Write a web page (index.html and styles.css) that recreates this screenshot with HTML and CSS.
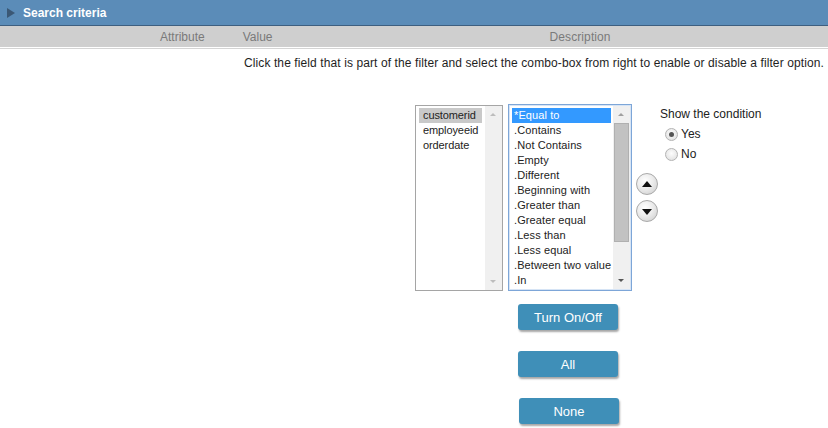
FILE: index.html
```html
<!DOCTYPE html>
<html>
<head>
<meta charset="utf-8">
<link rel="stylesheet" href="styles.css">
</head>
<body>
<div class="panel-head"><span class="tri"></span><span class="title">Search criteria</span></div>
<div class="cols">
  <span class="col-attr">Attribute</span>
  <span class="col-value">Value</span>
  <span class="col-desc">Description</span>
</div>
<div class="rule"></div>
<p class="hint">Click the field that is part of the filter and select the combo-box from right to enable or disable a filter option.</p>
<div class="filter">
  <div class="listbox fields">
    <div class="items">
      <div class="item sel-gray">customerid</div>
      <div class="item">employeeid</div>
      <div class="item">orderdate</div>
    </div>
    <div class="sbar">
      <span class="arr up"></span>
      <span class="track"></span>
      <span class="arr down"></span>
    </div>
  </div>
  <div class="listbox ops">
    <div class="items">
      <div class="item sel-blue">*Equal to</div>
      <div class="item">.Contains</div>
      <div class="item">.Not Contains</div>
      <div class="item">.Empty</div>
      <div class="item">.Different</div>
      <div class="item">.Beginning with</div>
      <div class="item">.Greater than</div>
      <div class="item">.Greater equal</div>
      <div class="item">.Less than</div>
      <div class="item">.Less equal</div>
      <div class="item">.Between two value</div>
      <div class="item">.In</div>
    </div>
    <div class="sbar">
      <span class="arr up dark"></span>
      <span class="track"><span class="thumb"></span></span>
      <span class="arr down dark"></span>
    </div>
  </div>
  <div class="movers">
    <span class="round"><span class="t-up"></span></span>
    <span class="round"><span class="t-down"></span></span>
  </div>
  <div class="cond">
    <div class="cond-title">Show the condition</div>
    <label class="radio"><span class="dot on"></span>Yes</label>
    <label class="radio"><span class="dot"></span>No</label>
  </div>
</div>
<div class="actions">
  <button class="btn">Turn On/Off</button>
  <button class="btn">All</button>
  <button class="btn nudge">None</button>
</div>
</body>
</html>
```
FILE: styles.css
```css
* { box-sizing: border-box; }
body {
  margin: 0;
  font-family: "Liberation Sans", Arial, sans-serif;
  font-size: 12px;
  color: #222;
  background: #fff;
  width: 828px;
  height: 428px;
  overflow: hidden;
}
.panel-head {
  height: 26px;
  background: #5b8cb8;
  border-bottom: 1px solid #3e5f80;
  display: flex;
  align-items: center;
  padding-left: 7px;
}
.tri {
  width: 0; height: 0;
  border-top: 5px solid transparent;
  border-bottom: 5px solid transparent;
  border-left: 8px solid #3b5875;
  margin-right: 8px;
}
.title {
  color: #fff;
  font-weight: bold;
  font-size: 12px;
}
.cols {
  height: 21px;
  background: #cfcfcf;
  color: #7a7a7a;
  display: flex;
  align-items: center;
  font-size: 12px;
}
.col-attr { margin-left: 160px; }
.col-value { margin-left: 38px; }
.col-desc { margin-left: 277px; letter-spacing: 0.1px; }
.rule {
  height: 2px;
  border-top: 1px solid #fff;
  border-bottom: 1px solid #d4d4d4;
}
.hint {
  margin: 7px 0 0 244px;
  font-size: 12px;
  line-height: 14px;
  color: #1e1e1e;
  white-space: nowrap;
  letter-spacing: 0.1px;
}
.filter {
  display: flex;
  align-items: flex-start;
  margin-top: 34px;
  padding-left: 415px;
}
.listbox {
  display: flex;
  background: #fff;
}
.fields {
  width: 88px;
  height: 186px;
  margin-top: 1px;
  border: 1px solid #a5a5a5;
}
.ops {
  width: 124px;
  height: 187px;
  margin-left: 5px;
  border: 1px solid #7da6d8;
  box-shadow: inset 0 0 0 1px #d6e4f5;
}
.items {
  flex: 1;
  padding: 2px 3px 0 3px;
}
.ops .items { padding: 3px 2px 0 3px; }
.item {
  height: 15px;
  line-height: 15px;
  padding-left: 4px;
  white-space: nowrap;
  font-size: 11px;
}
.fields .item { letter-spacing: -0.1px; }
.ops .item { padding-left: 2px; letter-spacing: 0.1px; }
.sel-gray { background: #c9c9c9; color: #222; }
.sel-blue { background: #3399ff; color: #fff; }
.sbar {
  width: 17px;
  background: #f0f0f0;
  display: flex;
  flex-direction: column;
  align-items: center;
}
.ops .sbar { margin: 1px 1px 1px 0; }
.track {
  flex: 1;
  width: 100%;
  padding: 0 1px;
}
.thumb {
  display: block;
  height: 119px;
  background: #c2c2c2;
  border: 1px solid #b0b0b0;
}
.arr {
  height: 17px;
  width: 17px;
  position: relative;
}
.arr::after {
  content: "";
  position: absolute;
  left: 5px;
  width: 0; height: 0;
  border-left: 3.5px solid transparent;
  border-right: 3.5px solid transparent;
}
.up::after { top: 7px; border-bottom: 3.5px solid #bdbdbd; }
.down::after { top: 7px; border-top: 3.5px solid #bdbdbd; }
.dark.up::after { border-bottom-color: #a0a0a0; }
.dark.down::after { border-top-color: #555; }
.movers {
  display: flex;
  flex-direction: column;
  gap: 5px;
  margin-left: 4px;
  margin-top: 69px;
}
.round {
  width: 22px;
  height: 22px;
  border-radius: 50%;
  border: 1px solid #a9a9a9;
  background: radial-gradient(circle at 40% 35%, #ffffff 0%, #ececec 45%, #c9c9c9 100%);
  display: flex;
  align-items: center;
  justify-content: center;
}
.t-up, .t-down {
  width: 0; height: 0;
  border-left: 5px solid transparent;
  border-right: 5px solid transparent;
}
.t-up { border-bottom: 6px solid #111; margin-top: -1px; }
.t-down { border-top: 6px solid #111; margin-top: 1px; }
.cond {
  margin-left: 2px;
  margin-top: 3px;
}
.cond-title {
  font-size: 12px;
  line-height: 14px;
  color: #222;
}
.radio {
  display: flex;
  align-items: center;
  margin-left: 5px;
  height: 20px;
  font-size: 12px;
  color: #222;
}
.radio:first-of-type { margin-top: 3px; }
.dot {
  width: 13px;
  height: 13px;
  border-radius: 50%;
  border: 1px solid #b3b3b3;
  background: radial-gradient(circle at 50% 40%, #fdfdfd, #dcdcdc);
  margin-right: 3px;
  display: flex;
  align-items: center;
  justify-content: center;
}
.dot.on::after {
  content: "";
  width: 5px;
  height: 5px;
  border-radius: 50%;
  background: #555;
}
.actions {
  display: flex;
  flex-direction: column;
  gap: 21px;
  margin: 13px 0 0 518px;
  align-items: flex-start;
}
.btn {
  width: 100px;
  height: 26px;
  border: none;
  border-radius: 3px;
  background: #3f8fb8;
  color: #fff;
  font-family: "Liberation Sans", Arial, sans-serif;
  font-size: 13px;
  box-shadow: 1px 2px 2px rgba(0,0,0,0.35);
  padding: 0;
}
.nudge { margin-left: 1px; }
```
